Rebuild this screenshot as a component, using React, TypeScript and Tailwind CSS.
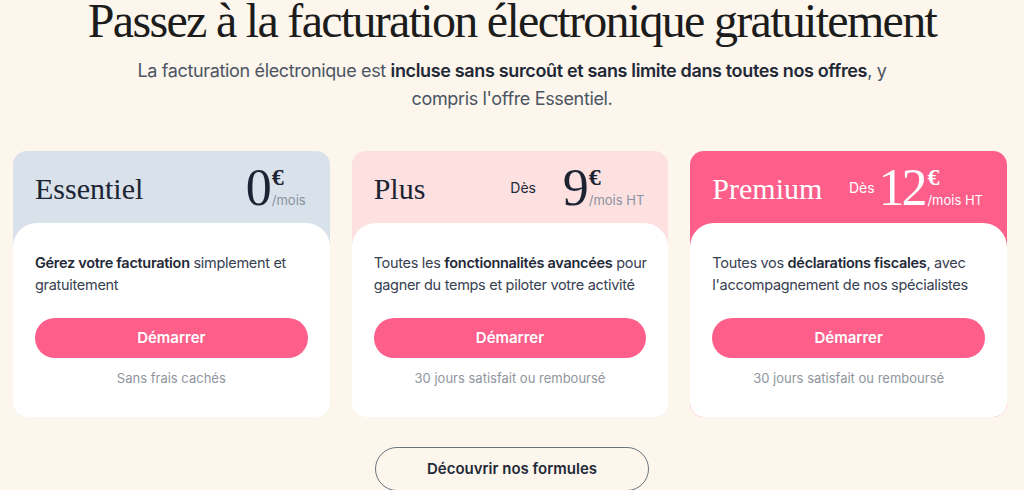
import React from "react";

const sans = { fontFamily: "Inter, 'Noto Sans', sans-serif" };
const serif = { fontFamily: "'Liberation Serif', 'DejaVu Serif', serif" };

type Plan = {
  name: string;
  price: string;
  unit: string;
  des: boolean;
  headBg: string;
  dark: boolean;
  body: React.ReactNode;
  note: string;
};

const B = ({ children }: { children: React.ReactNode }) => (
  <span className="font-semibold text-[#1f2937]">{children}</span>
);

const plans: Plan[] = [
  {
    name: "Essentiel",
    price: "0",
    unit: "/mois",
    des: false,
    headBg: "bg-[#d9e1ea]",
    dark: true,
    body: (
      <>
        <B>Gérez votre facturation</B> simplement et
        <br />
        gratuitement
      </>
    ),
    note: "Sans frais cachés",
  },
  {
    name: "Plus",
    price: "9",
    unit: "/mois HT",
    des: true,
    headBg: "bg-[#fde1e1]",
    dark: true,
    body: (
      <>
        Toutes les <B>fonctionnalités avancées</B> pour
        <br />
        gagner du temps et piloter votre activité
      </>
    ),
    note: "30 jours satisfait ou remboursé",
  },
  {
    name: "Premium",
    price: "12",
    unit: "/mois HT",
    des: true,
    headBg: "bg-[#fd5e8a]",
    dark: false,
    body: (
      <>
        Toutes vos <B>déclarations fiscales</B>, avec
        <br />
        l'accompagnement de nos spécialistes
      </>
    ),
    note: "30 jours satisfait ou remboursé",
  },
];

function PriceBlock({ p }: { p: Plan }) {
  const main = p.dark ? "text-[#1c2433]" : "text-white";
  const unit = p.dark ? "text-[#8a929e]" : "text-white";
  return (
    <div className="flex items-end">
      <span className={`text-[52px] leading-[40px] tracking-[-3px] ${main}`} style={serif}>
        {p.price}
      </span>
      <div className="flex flex-col ml-[3px]">
        <span className={`text-[24px] leading-[20px] font-bold ${main}`} style={serif}>
          €
        </span>
        <span className={`text-[13px] leading-[16px] mt-[5px] ${unit}`} style={sans}>
          {p.unit}
        </span>
      </div>
    </div>
  );
}

function Card({ p }: { p: Plan }) {
  const titleColor = p.dark ? "text-[#1c2433]" : "text-white";
  const desColor = p.dark ? "text-[#1f2937]" : "text-white";
  return (
    <div className={`rounded-[14px] ${p.headBg} flex flex-col overflow-hidden`}>
      <div className="h-[72px] flex items-center justify-between pl-[22px] pr-[24px]">
        <span className={`text-[30px] leading-none mt-[4px] ${titleColor}`} style={serif}>
          {p.name}
        </span>
        {p.des ? (
          <div className="w-[134px] flex items-center justify-between">
            <span className={`text-[14px] ${desColor}`} style={sans}>
              Dès
            </span>
            <PriceBlock p={p} />
          </div>
        ) : (
          <PriceBlock p={p} />
        )}
      </div>
      <div className="bg-white rounded-t-[24px] px-[22px] pt-[29px] pb-[30px] flex flex-col" style={sans}>
        <p className="text-[14.5px] leading-[22px] text-[#374151] tracking-[-0.3px] whitespace-nowrap h-[44px]">{p.body}</p>
        <button className="mt-[22px] h-[40px] w-full rounded-full bg-[#fd5e8a] text-white text-[15px] font-semibold">
          Démarrer
        </button>
        <p className="mt-[11px] text-center text-[13px] leading-[18px] text-[#8f959e]">{p.note}</p>
      </div>
    </div>
  );
}

export default function App() {
  return (
    <div className="w-[1024px] h-[490px] overflow-hidden bg-[#fdf6ec] flex flex-col items-center">
      <h1
        className="text-[48px] leading-[42px] tracking-[-1.7px] text-[#1c1c1c] text-center whitespace-nowrap"
        style={serif}
      >
        Passez à la facturation électronique gratuitement
      </h1>
      <p
        className="mt-[15px] text-center text-[18px] leading-[28px] text-[#4b5563] tracking-[-0.35px] whitespace-nowrap"
        style={sans}
      >
        La facturation électronique est{" "}
        <B>incluse sans surcoût et sans limite dans toutes nos offres</B>, y
        <br />
        compris l'offre Essentiel.
      </p>
      <div className="mt-[38px] w-full pl-[13px] pr-[17px] grid grid-cols-3 gap-[22px]">
        {plans.map((p) => (
          <Card key={p.name} p={p} />
        ))}
      </div>
      <button
        className="mt-[30px] w-[274px] h-[44px] rounded-full border border-[#6b7280] text-[15px] font-semibold text-[#1f2937] shrink-0"
        style={sans}
      >
        Découvrir nos formules
      </button>
    </div>
  );
}
